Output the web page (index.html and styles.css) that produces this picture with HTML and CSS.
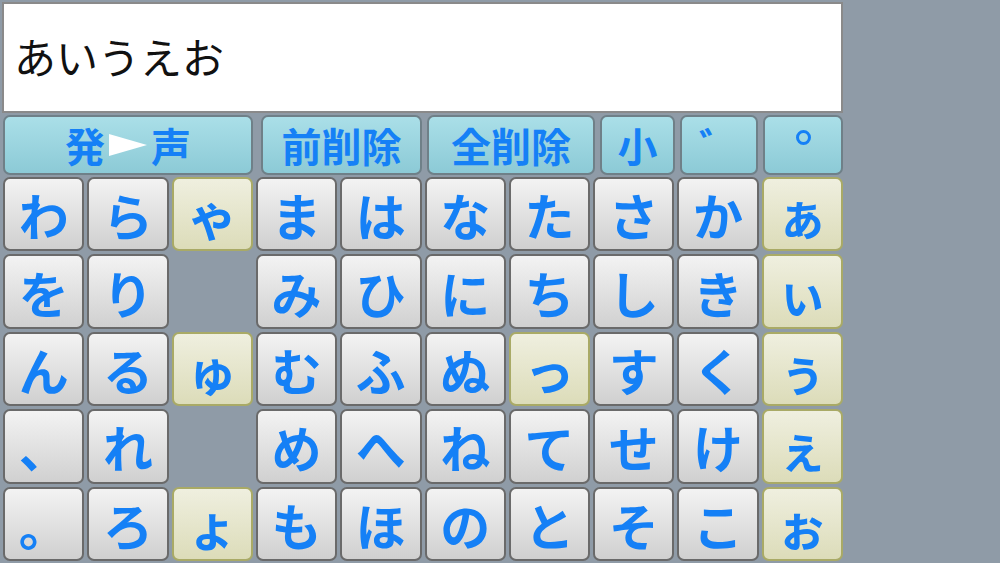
FILE: index.html
```html
<!DOCTYPE html>
<html lang="ja">
<head>
  <meta charset="UTF-8" />
  <title>かな入力</title>
  <link rel="stylesheet" href="styles.css">
</head>
<body>
  <div class="panel">
    <!-- 入力欄 -->
    <div class="display">あいうえお</div>

    <!-- 機能キー -->
    <div class="func-row">
      <div class="key func speak">発<svg class="arrow" width="38" height="22" viewBox="0 0 38 22"><polygon points="0,0 38,11 0,22" fill="#fff"/></svg>声</div>
      <div class="key func del">前削除</div>
      <div class="key func clear">全削除</div>
      <div class="key func small">小</div>
      <div class="key func dakuten">゛</div>
      <div class="key func handaku"><span class="ring" title="゜"></span></div>
    </div>

    <!-- かなキー -->
    <div class="kana-grid">
      <div class="key">わ</div><div class="key">ら</div><div class="key sub">ゃ</div><div class="key">ま</div><div class="key">は</div><div class="key">な</div><div class="key">た</div><div class="key">さ</div><div class="key">か</div><div class="key sub">ぁ</div>
      <div class="key">を</div><div class="key">り</div><div class="blank"></div><div class="key">み</div><div class="key">ひ</div><div class="key">に</div><div class="key">ち</div><div class="key">し</div><div class="key">き</div><div class="key sub">ぃ</div>
      <div class="key">ん</div><div class="key">る</div><div class="key sub">ゅ</div><div class="key">む</div><div class="key">ふ</div><div class="key">ぬ</div><div class="key sub">っ</div><div class="key">す</div><div class="key">く</div><div class="key sub">ぅ</div>
      <div class="key">、</div><div class="key">れ</div><div class="blank"></div><div class="key">め</div><div class="key">へ</div><div class="key">ね</div><div class="key">て</div><div class="key">せ</div><div class="key">け</div><div class="key sub">ぇ</div>
      <div class="key">。</div><div class="key">ろ</div><div class="key sub">ょ</div><div class="key">も</div><div class="key">ほ</div><div class="key">の</div><div class="key">と</div><div class="key">そ</div><div class="key">こ</div><div class="key sub">ぉ</div>
    </div>
  </div>
</body>
</html>
```

FILE: styles.css
```css
body {
  margin: 0;
  background: #8f9ba7;
  font-family: "Noto Sans CJK JP", "Noto Sans", sans-serif;
  overflow: hidden;
}

.panel {
  width: 841px;
  padding: 2px 0 0 2px;
  display: flex;
  flex-direction: column;
}

/* 入力欄 */
.display {
  height: 111px;
  box-sizing: border-box;
  border: 2px solid #8a8a8a;
  background: #fff;
  display: flex;
  align-items: center;
  padding: 0 0 4px 10px;
  font-size: 42px;
  color: #111;
}

/* キー共通 */
.key {
  box-sizing: border-box;
  border: 2px solid #6a6a6a;
  border-radius: 7px;
  background: linear-gradient(#f3f3f3, #d0d0d0);
  color: #1580f6;
  font-weight: bold;
  font-size: 50px;
  display: flex;
  align-items: center;
  justify-content: center;
  line-height: 1;
}

.key.sub {
  border-color: #a9aa66;
  background: linear-gradient(#efefdf, #dcdcb9);
}

/* 機能キー */
.func-row {
  display: flex;
  gap: 5px;
  height: 60px;
  margin: 2px 0 0 1px;
}

.key.func {
  border-color: #6f8088;
  background: linear-gradient(#aadfe8, #8ccad6);
  font-size: 40px;
}

.speak { width: 250px; margin-right: 3px; }
.del { width: 161px; }
.clear { width: 168px; }
.small { width: 75px; }
.dakuten { width: 78px; }
.handaku { width: 80px; align-items: flex-start; }

.arrow {
  margin: 0 4px;
}

.ring {
  width: 9px;
  height: 9px;
  margin-top: 13px;
  border: 3.5px solid #1580f6;
  border-radius: 50%;
}

/* かな配列 */
.kana-grid {
  display: grid;
  grid-template-columns: repeat(10, 1fr);
  grid-template-rows: repeat(5, 1fr);
  gap: 3px;
  width: 840px;
  height: 384px;
  margin: 2px 0 0 1px;
}
```
